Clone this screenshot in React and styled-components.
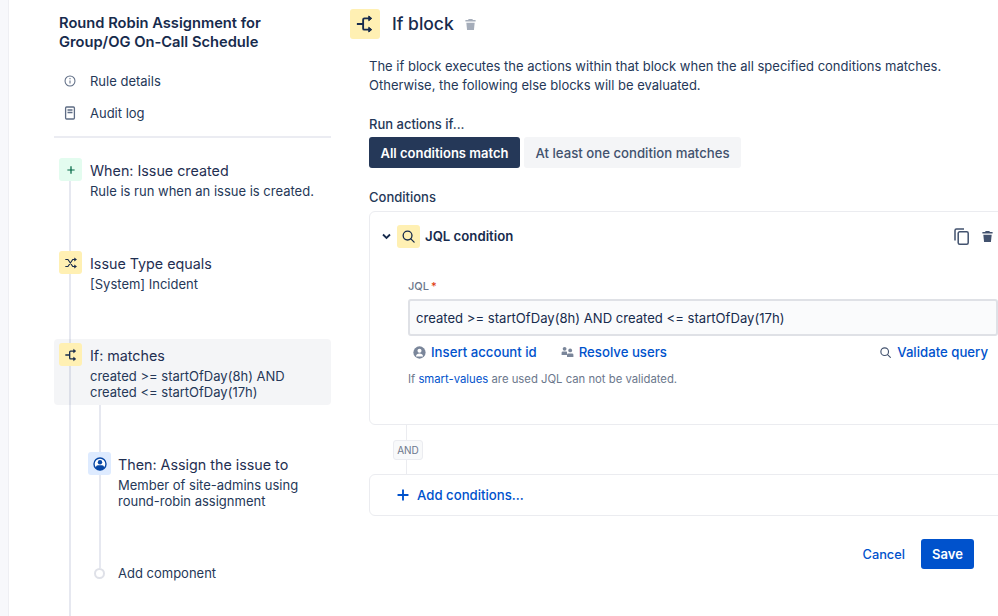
import styled, { createGlobalStyle } from "styled-components";

const GlobalStyle = createGlobalStyle`
  html, body {
    margin: 0;
    padding: 0;
    background: #fff;
    overflow: hidden;
  }
  * {
    box-sizing: border-box;
  }
`;

const Page = styled.div`
  display: flex;
  width: 998px;
  height: 616px;
  overflow: hidden;
  font-family: Inter, "Liberation Sans", sans-serif;
  color: #172b4d;
`;

const Strip = styled.div`
  width: 9px;
  flex: none;
  background: #f7f8fb;
  border-right: 1px solid #eeeff3;
`;

const Sidebar = styled.aside`
  position: relative;
  width: 277px;
  margin-left: 45px;
  flex: none;
  padding-top: 14px;
`;

const RuleTitle = styled.h1`
  margin: 0 0 0 5px;
  font-size: 14.7px;
  line-height: 19px;
  font-weight: 600;
`;

const NavList = styled.div`
  display: flex;
  flex-direction: column;
  gap: 8px;
  margin-top: 17px;
  padding-left: 10px;
`;

const NavItem = styled.div`
  display: flex;
  align-items: center;
  gap: 14px;
  height: 24px;
  font-size: 13px;
  color: #253858;
`;

const NavIcon = styled.span`
  display: flex;
  width: 12px;
  justify-content: center;
  color: #5e6c84;
`;

const Divider = styled.hr`
  border: 0;
  height: 2px;
  margin: 11px 0 16px;
  background: #ebecf2;
`;

const Rail = styled.div`
  position: absolute;
  left: 15px;
  top: 170px;
  bottom: 0;
  width: 2px;
  background: #e6e8f0;
`;

const NestedRail = styled.div`
  position: absolute;
  left: 45px;
  top: 405px;
  height: 163px;
  width: 2px;
  background: #e6e8f0;
`;

const Step = styled.div`
  position: relative;
  display: flex;
  gap: ${(p) => (p.$nested ? "7px" : "8px")};
  padding: 4px 5px 4px ${(p) => (p.$nested ? "34px" : "5px")};
  height: ${(p) => p.$height}px;
  margin-top: ${(p) => p.$top || 0}px;
  border-radius: 4px;
  background: ${(p) => (p.$active ? "rgba(9, 30, 66, 0.045)" : "transparent")};
`;

const StepIcon = styled.div`
  display: flex;
  align-items: center;
  justify-content: center;
  flex: none;
  width: 23px;
  height: 23px;
  border-radius: 3px;
  background: ${(p) => p.$bg};
  color: ${(p) => p.$color};
`;

const StepBody = styled.div`
  padding-top: 3px;
`;

const StepTitle = styled.div`
  font-size: 14.3px;
  line-height: 19px;
  color: #1f2f52;
`;

const StepText = styled.div`
  margin-top: 3px;
  font-size: 13px;
  line-height: 16px;
  color: #253858;
`;

const AddRow = styled.div`
  position: relative;
  display: flex;
  align-items: center;
  gap: 13px;
  padding-left: 40px;
  height: 20px;
  margin-top: 3px;
  font-size: 13px;
  color: #253858;
`;

const AddDot = styled.span`
  width: 11px;
  height: 11px;
  border-radius: 50%;
  background: #fff;
  border: 2px solid #dfe1e8;
`;

const Main = styled.main`
  flex: 1;
  min-width: 0;
  margin-left: 19px;
  padding-top: 9px;
`;

const Header = styled.div`
  display: flex;
  align-items: center;
  height: 30px;
`;

const HeaderIcon = styled.div`
  display: flex;
  align-items: center;
  justify-content: center;
  width: 30px;
  height: 30px;
  border-radius: 3px;
  background: #fff0b3;
  color: #172b4d;
`;

const HeaderTitle = styled.h2`
  margin: 0 0 0 12px;
  font-size: 17.5px;
  line-height: 30px;
  font-weight: 500;
  color: #172b4d;
`;

const HeaderTrash = styled.span`
  display: flex;
  margin-left: 10px;
  color: #a5adba;
`;

const Content = styled.div`
  padding-left: 19px;
`;

const Description = styled.p`
  margin: 18px 0 0;
  width: 610px;
  font-size: 13px;
  line-height: 19px;
  color: #253858;
`;

const SectionLabel = styled.div`
  margin-top: ${(p) => p.$top}px;
  font-size: 13px;
  line-height: 16px;
  font-weight: 500;
  color: #253858;
`;

const Toggle = styled.div`
  display: flex;
  gap: 4px;
  margin-top: 5px;
`;

const ToggleButton = styled.div`
  display: flex;
  align-items: center;
  height: 31px;
  padding: 0 11.5px;
  border-radius: 3px;
  font-size: ${(p) => (p.$active ? "13px" : "13.2px")};
  font-weight: ${(p) => (p.$active ? 600 : 500)};
  background: ${(p) => (p.$active ? "#253858" : "#f4f5f7")};
  color: ${(p) => (p.$active ? "#fff" : "#42526e")};
`;

const Card = styled.section`
  width: 660px;
  margin-top: 6px;
  height: 214px;
  border: 1px solid #ebecf0;
  border-radius: 6px;
  padding: 12px 0 0 12px;
`;

const CardHead = styled.div`
  display: flex;
  align-items: center;
  width: 612px;
  height: 24px;
`;

const Chevron = styled.span`
  display: flex;
  width: 15px;
  color: #172b4d;
`;

const CardIcon = styled(StepIcon)`
  background: #fff0b3;
  color: #172b4d;
`;

const CardTitle = styled.div`
  margin-left: 5px;
  font-size: 13.2px;
  font-weight: 600;
  color: #172b4d;
`;

const CardTools = styled.div`
  display: flex;
  align-items: center;
  gap: 12px;
  margin-left: auto;
  color: #42526e;
`;

const Field = styled.div`
  margin: 31px 0 0 26px;
`;

const FieldLabel = styled.div`
  font-size: 11px;
  line-height: 14px;
  font-weight: 500;
  color: #6b778c;
`;

const Required = styled.span`
  margin-left: 2px;
  color: #de350b;
`;

const JqlInput = styled.div`
  display: flex;
  align-items: center;
  width: 590px;
  height: 37px;
  margin-top: 6px;
  padding-left: 6px;
  border: 2px solid #dfe1e6;
  border-radius: 3px;
  background: #fafbfc;
  font-size: 13.1px;
  color: #172b4d;
`;

const Actions = styled.div`
  display: flex;
  align-items: center;
  width: 590px;
  margin-top: 7px;
  padding: 0 10px 0 5px;
  height: 18px;
`;

const Action = styled.div`
  display: flex;
  align-items: center;
  gap: 5px;
  margin-right: ${(p) => p.$gap || 0}px;
  margin-left: ${(p) => (p.$end ? "auto" : 0)};
  font-size: 13.2px;
  font-weight: 500;
  color: #0052cc;
`;

const ActionIcon = styled.span`
  display: flex;
  color: ${(p) => p.$color || "#7a869a"};
`;

const Hint = styled.div`
  margin-top: 11px;
  font-size: 11.3px;
  line-height: 14px;
  color: #6b778c;
`;

const HintLink = styled.span`
  color: #0052cc;
`;

const Connector = styled.div`
  position: relative;
  height: 49px;
  padding: 15px 0 0 24px;
`;

const ConnectorLine = styled.div`
  position: absolute;
  left: 37px;
  top: 0;
  bottom: 0;
  width: 1px;
  background: #ebecf0;
`;

const AndBadge = styled.div`
  position: relative;
  display: flex;
  align-items: center;
  justify-content: center;
  width: 30px;
  height: 20px;
  border: 1px solid #ebecf0;
  border-radius: 3px;
  background: #f8f9fa;
  font-size: 10px;
  font-weight: 400;
  color: #6b778c;
`;

const AddCard = styled.div`
  display: flex;
  align-items: center;
  gap: 8px;
  width: 660px;
  height: 42px;
  padding-left: 27px;
  border: 1px solid #ebecf0;
  border-radius: 6px;
  font-size: 13.2px;
  font-weight: 500;
  color: #0052cc;
`;

const Footer = styled.div`
  display: flex;
  align-items: center;
  justify-content: flex-end;
  gap: 16px;
  width: 605px;
  margin-top: 23px;
`;

const CancelButton = styled.div`
  font-size: 12.8px;
  font-weight: 500;
  color: #0052cc;
`;

const SaveButton = styled.div`
  display: flex;
  align-items: center;
  justify-content: center;
  width: 53px;
  height: 30px;
  border-radius: 3px;
  background: #0052cc;
  color: #fff;
  font-size: 13px;
  font-weight: 600;
`;

const IfIcon = ({ size = 14 }) => (
  <svg width={size} height={size} viewBox="0 0 16 16" fill="none" stroke="currentColor" strokeWidth="1.5">
    <path d="M1.5 8H6.5M6.5 8V4.5Q6.5 3.5 7.5 3.5H12M6.5 8V11.5Q6.5 12.5 7.5 12.5H12" />
    <path d="M11 1.6L13.4 3.5L11 5.4ZM11 10.6L13.4 12.5L11 14.4Z" fill="currentColor" strokeWidth="0.8" />
  </svg>
);

const ShuffleIcon = () => (
  <svg width="14" height="14" viewBox="0 0 16 16" fill="none" stroke="currentColor" strokeWidth="1.3">
    <path d="M1.5 4H4.5L10 12H12.5M1.5 12H4.5L10 4H12.5" />
    <path d="M12 2.2L14.4 4L12 5.8ZM12 10.2L14.4 12L12 13.8Z" fill="currentColor" strokeWidth="0.6" />
  </svg>
);

const TrashIcon = ({ size = 13 }) => (
  <svg width={size} height={size} viewBox="0 0 14 14" fill="currentColor">
    <path d="M5 1H9L9.6 2.2H12.5V3.8H1.5V2.2H4.4Z" />
    <path d="M2.5 5H11.5L10.7 13H3.3Z" />
  </svg>
);

const SearchIcon = ({ size = 15 }) => (
  <svg width={size} height={size} viewBox="0 0 16 16" fill="none" stroke="currentColor" strokeWidth="1.4">
    <circle cx="7" cy="7" r="4.7" />
    <path d="M10.5 10.5L14 14" strokeLinecap="round" />
  </svg>
);

const InfoIcon = () => (
  <svg width="14" height="14" viewBox="0 0 14 14" fill="none" stroke="currentColor" strokeWidth="1.2">
    <circle cx="7" cy="7" r="5.8" />
    <path d="M7 6.4V10" />
    <path d="M7 3.6V5" />
  </svg>
);

const LogIcon = () => (
  <svg width="12" height="14" viewBox="0 0 12 14" fill="none" stroke="currentColor" strokeWidth="1.3">
    <rect x="1.6" y="1" width="8.8" height="12" rx="1" />
    <path d="M3.5 4H8.5M3.5 6.5H8.5" />
  </svg>
);

const PersonIcon = ({ size = 14 }) => (
  <svg width={size} height={size} viewBox="0 0 14 14">
    <circle cx="7" cy="7" r="6.6" fill="currentColor" />
    <circle cx="7" cy="5.2" r="2.2" fill="#fff" />
    <path d="M3.2 11.2Q3.6 8.2 7 8.2Q10.4 8.2 10.8 11.2Z" fill="#fff" />
  </svg>
);

const AssigneeIcon = () => (
  <svg width="14" height="14" viewBox="0 0 14 14">
    <circle cx="7" cy="7" r="6" fill="#fff" stroke="currentColor" strokeWidth="1.4" />
    <circle cx="7" cy="5.2" r="2.2" fill="currentColor" />
    <path d="M3 11.6V10Q3 8.2 5 8.2H9Q11 8.2 11 10V11.6Q9 13.2 7 13.2Q5 13.2 3 11.6Z" fill="currentColor" />
  </svg>
);

const PeopleIcon = () => (
  <svg width="13" height="12" viewBox="0 0 13 12" fill="currentColor">
    <circle cx="3.6" cy="2.8" r="1.9" />
    <circle cx="9.2" cy="4.4" r="1.9" />
    <path d="M0.6 9V6.8Q0.6 5.4 2 5.4H5.2Q5.8 5.4 6 5.7V9Z" />
    <path d="M6 11V8.8Q6 7.4 7.4 7.4H11Q12.4 7.4 12.4 8.8V11Z" />
  </svg>
);

const CopyIcon = () => (
  <svg width="15" height="17" viewBox="0 0 15 17" fill="none" stroke="currentColor" strokeWidth="1.5">
    <path d="M1 12.5V2.5Q1 1 2.5 1H10" />
    <rect x="4.2" y="3.8" width="10" height="12.4" rx="1.5" />
  </svg>
);

const ChevronIcon = () => (
  <svg width="9" height="7" viewBox="0 0 9 7" fill="none" stroke="currentColor" strokeWidth="1.8">
    <path d="M1 1.5L4.5 5L8 1.5" />
  </svg>
);

const PlusIcon = ({ size = 11 }) => (
  <svg width={size} height={size} viewBox="0 0 11 11" fill="none" stroke="currentColor" strokeWidth="1.7">
    <path d="M5.5 0.5V10.5M0.5 5.5H10.5" />
  </svg>
);

export default function App() {
  return (
    <Page>
      <GlobalStyle />
      <Strip />
      <Sidebar>
        <RuleTitle>
          Round Robin Assignment for
          <br />
          Group/OG On-Call Schedule
        </RuleTitle>
        <NavList>
          <NavItem>
            <NavIcon>
              <InfoIcon />
            </NavIcon>
            Rule details
          </NavItem>
          <NavItem>
            <NavIcon>
              <LogIcon />
            </NavIcon>
            Audit log
          </NavItem>
        </NavList>
        <Divider />
        <Rail />
        <NestedRail />
        <Step $height={93}>
          <StepIcon $bg="#e3fcef" $color="#006644">
            <PlusIcon size={8} />
          </StepIcon>
          <StepBody>
            <StepTitle>When: Issue created</StepTitle>
            <StepText>Rule is run when an issue is created.</StepText>
          </StepBody>
        </Step>
        <Step $height={92}>
          <StepIcon $bg="#fff0b3" $color="#172b4d">
            <ShuffleIcon />
          </StepIcon>
          <StepBody>
            <StepTitle>Issue Type equals</StepTitle>
            <StepText>[System] Incident</StepText>
          </StepBody>
        </Step>
        <Step $active $height={66}>
          <StepIcon $bg="#fff0b3" $color="#172b4d">
            <IfIcon />
          </StepIcon>
          <StepBody>
            <StepTitle>If: matches</StepTitle>
            <StepText>
              created &gt;= startOfDay(8h) AND
              <br />
              created &lt;= startOfDay(17h)
            </StepText>
          </StepBody>
        </Step>
        <Step $nested $height={112} $top={43}>
          <StepIcon $bg="#deebff" $color="#0747a6">
            <AssigneeIcon />
          </StepIcon>
          <StepBody>
            <StepTitle>Then: Assign the issue to</StepTitle>
            <StepText>
              Member of site-admins using
              <br />
              round-robin assignment
            </StepText>
          </StepBody>
        </Step>
        <AddRow>
          <AddDot />
          Add component
        </AddRow>
      </Sidebar>
      <Main>
        <Header>
          <HeaderIcon>
            <IfIcon size={20} />
          </HeaderIcon>
          <HeaderTitle>If block</HeaderTitle>
          <HeaderTrash>
            <TrashIcon size={13} />
          </HeaderTrash>
        </Header>
        <Content>
          <Description>
            The if block executes the actions within that block when the all specified conditions matches.
            <br />
            Otherwise, the following else blocks will be evaluated.
          </Description>
          <SectionLabel $top={21}>Run actions if...</SectionLabel>
          <Toggle>
            <ToggleButton $active>All conditions match</ToggleButton>
            <ToggleButton>At least one condition matches</ToggleButton>
          </Toggle>
          <SectionLabel $top={21}>Conditions</SectionLabel>
          <Card>
            <CardHead>
              <Chevron>
                <ChevronIcon />
              </Chevron>
              <CardIcon>
                <SearchIcon />
              </CardIcon>
              <CardTitle>JQL condition</CardTitle>
              <CardTools>
                <CopyIcon />
                <TrashIcon />
              </CardTools>
            </CardHead>
            <Field>
              <FieldLabel>
                JQL<Required>*</Required>
              </FieldLabel>
              <JqlInput>created &gt;= startOfDay(8h) AND created &lt;= startOfDay(17h)</JqlInput>
              <Actions>
                <Action $gap={24}>
                  <ActionIcon>
                    <PersonIcon size={13} />
                  </ActionIcon>
                  Insert account id
                </Action>
                <Action>
                  <ActionIcon>
                    <PeopleIcon />
                  </ActionIcon>
                  Resolve users
                </Action>
                <Action $end>
                  <ActionIcon $color="#42526e">
                    <SearchIcon size={13} />
                  </ActionIcon>
                  Validate query
                </Action>
              </Actions>
              <Hint>
                If <HintLink>smart-values</HintLink> are used JQL can not be validated.
              </Hint>
            </Field>
          </Card>
          <Connector>
            <ConnectorLine />
            <AndBadge>AND</AndBadge>
          </Connector>
          <AddCard>
            <PlusIcon size={12} />
            Add conditions...
          </AddCard>
          <Footer>
            <CancelButton>Cancel</CancelButton>
            <SaveButton>Save</SaveButton>
          </Footer>
        </Content>
      </Main>
    </Page>
  );
}
